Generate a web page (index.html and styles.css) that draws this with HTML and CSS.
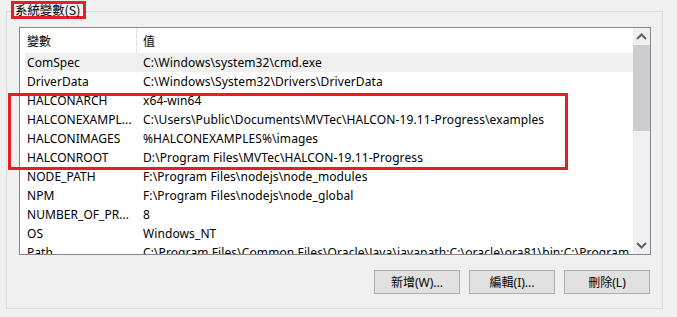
FILE: index.html
```html
<!DOCTYPE html>
<html lang="zh-Hant">
<head>
<meta charset="utf-8">
<link rel="stylesheet" href="styles.css">
</head>
<body>
<div class="group">
  <div class="list">
    <div class="content">
      <div class="header">
        <div class="hcell hname">變數</div>
        <div class="hcell hval">值</div>
      </div>
      <div class="row hover"><span class="name">ComSpec</span><span class="val">C:\Windows\system32\cmd.exe</span></div>
      <div class="row"><span class="name">DriverData</span><span class="val">C:\Windows\System32\Drivers\DriverData</span></div>
      <div class="row"><span class="name">HALCONARCH</span><span class="val">x64-win64</span></div>
      <div class="row"><span class="name">HALCONEXAMPL...</span><span class="val">C:\Users\Public\Documents\MVTec\HALCON-19.11-Progress\examples</span></div>
      <div class="row"><span class="name">HALCONIMAGES</span><span class="val">%HALCONEXAMPLES%\images</span></div>
      <div class="row"><span class="name">HALCONROOT</span><span class="val">D:\Program Files\MVTec\HALCON-19.11-Progress</span></div>
      <div class="row"><span class="name">NODE_PATH</span><span class="val">F:\Program Files\nodejs\node_modules</span></div>
      <div class="row"><span class="name">NPM</span><span class="val">F:\Program Files\nodejs\node_global</span></div>
      <div class="row"><span class="name">NUMBER_OF_PR...</span><span class="val">8</span></div>
      <div class="row"><span class="name">OS</span><span class="val">Windows_NT</span></div>
      <div class="row"><span class="name">Path</span><span class="val">C:\Program Files\Common Files\Oracle\Java\javapath;C:\oracle\ora81\bin;C:\Program Files\Git\cmd</span></div>
    </div>
    <div class="scrollbar">
      <div class="arrow"><svg width="11" height="7" viewBox="0 0 11 7"><path d="M1 6 L5.5 1.5 L10 6" fill="none" stroke="#606060" stroke-width="2"/></svg></div>
      <div class="thumb"></div>
      <div class="track"></div>
      <div class="arrow"><svg width="11" height="7" viewBox="0 0 11 7"><path d="M1 1 L5.5 5.5 L10 1" fill="none" stroke="#606060" stroke-width="2"/></svg></div>
    </div>
  </div>
  <div class="buttons">
    <button class="btn">新增(W)...</button>
    <button class="btn">編輯(I)...</button>
    <button class="btn">刪除(L)</button>
  </div>
</div>
<div class="title">系統變數(S)</div>
<div class="mark"></div>
</body>
</html>
```
FILE: styles.css
```css
html, body {
  margin: 0;
  padding: 0;
  background: #f0f0f0;
  width: 677px;
  height: 317px;
  overflow: hidden;
  font-family: "Noto Sans", "Noto Sans CJK TC", sans-serif;
  font-size: 12px;
  color: #000;
}
.group {
  margin: 11px 0 0 6px;
  width: 655px;
  height: 296px;
  border: 1px solid #dcdcdc;
  display: flex;
  flex-direction: column;
}
.list {
  margin: 15px 0 0 12px;
  width: 630px;
  height: 226px;
  border: 1px solid #828790;
  background: #fff;
  display: flex;
  overflow: hidden;
}
.content {
  width: 613px;
  overflow: hidden;
}
.header {
  display: flex;
  height: 25px;
  align-items: stretch;
}
.hcell {
  display: flex;
  align-items: center;
  font-family: "Noto Sans CJK TC", sans-serif;
}
.hname {
  width: 109px;
  padding-left: 7px;
  border-right: 1px solid #e5e5e5;
}
.hval {
  padding-left: 6px;
}
.row {
  display: flex;
  height: 19px;
  align-items: center;
  margin-left: 5px;
  white-space: nowrap;
  letter-spacing: 0.1px;
}
.row.hover {
  background: #f0f0f0;
}
.name {
  width: 116px;
  padding-left: 2px;
  flex: none;
  letter-spacing: 0.05px;
}
.val {
  flex: none;
}
.scrollbar {
  width: 17px;
  background: #f0f0f0;
  display: flex;
  flex-direction: column;
}
.arrow {
  height: 17px;
  display: flex;
  align-items: center;
  justify-content: center;
}
.thumb {
  height: 86px;
  background: #cdcdcd;
}
.track { flex: 1; }
.buttons {
  display: flex;
  justify-content: flex-end;
  gap: 9px;
  margin: 15px 12px 0 0;
}
.btn {
  width: 86px;
  height: 24px;
  background: #e1e1e1;
  border: 1px solid #adadad;
  font-family: "Noto Sans", "Noto Sans CJK TC", sans-serif;
  font-size: 12px;
  color: #000;
  padding: 0;
}
.title {
  position: absolute;
  left: 11px;
  top: 1px;
  border: 3px solid #e81c24;
  background: #f0f0f0;
  height: 12px;
  line-height: 12px;
  width: 68px;
  padding-left: 1px;
  font-family: "Noto Sans CJK TC", sans-serif;
  font-size: 12.4px;
  white-space: nowrap;
}
.mark {
  position: absolute;
  left: 8px;
  top: 93px;
  width: 554px;
  height: 71px;
  border: 3px solid #e81c24;
}
```
